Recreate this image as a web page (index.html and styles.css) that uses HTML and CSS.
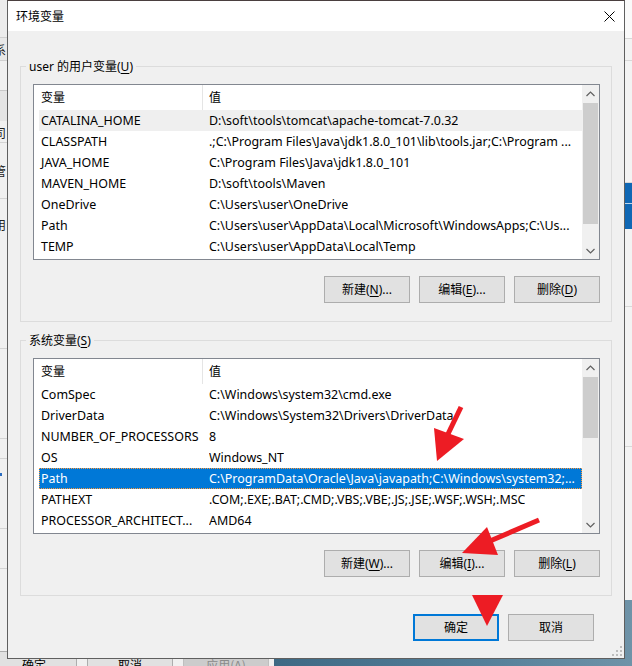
FILE: index.html
```html
<!DOCTYPE html>
<html lang="zh-CN">
<head>
<meta charset="utf-8">
<title>环境变量</title>
<link rel="stylesheet" href="styles.css">
</head>
<body>
<div class="screen">
  <div class="backwin-left">
    <div class="bl bl-a"></div>
    <div class="bl bl-b"><span class="frag">系</span></div>
    <div class="bl bl-c"></div>
    <div class="bl bl-d"></div>
    <div class="bl bl-e"><span class="frag">司</span></div>
    <div class="bl bl-f"><span class="frag">管</span></div>
    <div class="bl bl-g"><span class="frag">用</span></div>
    <div class="bl bl-h"></div>
    <div class="bl bl-i"></div>
    <div class="bl bl-j"><span class="dot"></span></div>
    <div class="bl bl-k"></div>
    <div class="bl bl-l"></div>
  </div>
  <div class="backwin-right">
    <div class="br br-a"></div>
    <div class="br br-b"></div>
    <div class="br br-c"></div>
    <div class="br br-blue"></div>
    <div class="br br-d"></div>
    <div class="br br-e"></div>
    <div class="br br-f"></div>
  </div>
  <div class="desktop"></div>
  <div class="backbtns">
    <div class="bbtn bbtn-first">确定</div>
    <div class="bbtn">取消</div>
    <div class="bbtn bbtn-disabled">应用(A)</div>
  </div>

  <div class="dialog">
    <div class="titlebar">
      <span class="title">环境变量</span>
      <svg class="close" width="11" height="11" viewBox="0 0 11 11"><path d="M0.5 0.5 L10.5 10.5 M10.5 0.5 L0.5 10.5" stroke="#000" stroke-width="1" fill="none"/></svg>
    </div>
    <div class="content">
      <div class="group group-user">
        <span class="group-label">user 的用户变量(<u>U</u>)</span>
        <div class="list">
          <div class="list-main">
            <div class="lv-head">
              <div class="hcell1">变量</div>
              <div class="hcell2">值</div>
            </div>
            <div class="lv-rows">
              <div class="row row-hot"><div class="c1">CATALINA_HOME</div><div class="c2">D:\soft\tools\tomcat\apache-tomcat-7.0.32</div></div>
              <div class="row"><div class="c1">CLASSPATH</div><div class="c2">.;C:\Program Files\Java\jdk1.8.0_101\lib\tools.jar;C:\Program ...</div></div>
              <div class="row"><div class="c1">JAVA_HOME</div><div class="c2">C:\Program Files\Java\jdk1.8.0_101</div></div>
              <div class="row"><div class="c1">MAVEN_HOME</div><div class="c2">D:\soft\tools\Maven</div></div>
              <div class="row"><div class="c1">OneDrive</div><div class="c2">C:\Users\user\OneDrive</div></div>
              <div class="row"><div class="c1">Path</div><div class="c2">C:\Users\user\AppData\Local\Microsoft\WindowsApps;C:\Us...</div></div>
              <div class="row"><div class="c1">TEMP</div><div class="c2">C:\Users\user\AppData\Local\Temp</div></div>
            </div>
          </div>
          <div class="scrollbar">
            <div class="sb-btn"><svg width="9" height="6" viewBox="0 0 9 6"><path d="M0.5 5 L4.5 1 L8.5 5" stroke="#606060" stroke-width="1.2" fill="none"/></svg></div>
            <div class="sb-track"><div class="thumb thumb-user"></div></div>
            <div class="sb-btn"><svg width="9" height="6" viewBox="0 0 9 6"><path d="M0.5 1 L4.5 5 L8.5 1" stroke="#606060" stroke-width="1.2" fill="none"/></svg></div>
          </div>
        </div>
        <div class="btnrow">
          <div class="btn">新建(<u>N</u>)...</div>
          <div class="btn">编辑(<u>E</u>)...</div>
          <div class="btn">删除(<u>D</u>)</div>
        </div>
      </div>

      <div class="group group-sys">
        <span class="group-label">系统变量(<u>S</u>)</span>
        <div class="list">
          <div class="list-main">
            <div class="lv-head">
              <div class="hcell1">变量</div>
              <div class="hcell2">值</div>
            </div>
            <div class="lv-rows">
              <div class="row"><div class="c1">ComSpec</div><div class="c2">C:\Windows\system32\cmd.exe</div></div>
              <div class="row"><div class="c1">DriverData</div><div class="c2">C:\Windows\System32\Drivers\DriverData</div></div>
              <div class="row"><div class="c1">NUMBER_OF_PROCESSORS</div><div class="c2">8</div></div>
              <div class="row"><div class="c1">OS</div><div class="c2">Windows_NT</div></div>
              <div class="row row-sel"><div class="c1">Path</div><div class="c2">C:\ProgramData\Oracle\Java\javapath;C:\Windows\system32;...</div></div>
              <div class="row"><div class="c1">PATHEXT</div><div class="c2">.COM;.EXE;.BAT;.CMD;.VBS;.VBE;.JS;.JSE;.WSF;.WSH;.MSC</div></div>
              <div class="row"><div class="c1">PROCESSOR_ARCHITECT...</div><div class="c2">AMD64</div></div>
            </div>
          </div>
          <div class="scrollbar">
            <div class="sb-btn"><svg width="9" height="6" viewBox="0 0 9 6"><path d="M0.5 5 L4.5 1 L8.5 5" stroke="#606060" stroke-width="1.2" fill="none"/></svg></div>
            <div class="sb-track"><div class="thumb thumb-sys"></div></div>
            <div class="sb-btn"><svg width="9" height="6" viewBox="0 0 9 6"><path d="M0.5 1 L4.5 5 L8.5 1" stroke="#606060" stroke-width="1.2" fill="none"/></svg></div>
          </div>
        </div>
        <div class="btnrow">
          <div class="btn">新建(<u>W</u>)...</div>
          <div class="btn">编辑(<u>I</u>)...</div>
          <div class="btn">删除(<u>L</u>)</div>
        </div>
      </div>

      <div class="footer">
        <div class="btn btn-default">确定</div>
        <div class="btn">取消</div>
      </div>
    </div>
    <svg class="grip" width="10" height="10" viewBox="0 0 10 10">
      <rect x="8" y="0" width="2" height="2" fill="#bdbdbd"/>
      <rect x="4" y="4" width="2" height="2" fill="#bdbdbd"/>
      <rect x="8" y="4" width="2" height="2" fill="#bdbdbd"/>
      <rect x="0" y="8" width="2" height="2" fill="#bdbdbd"/>
      <rect x="4" y="8" width="2" height="2" fill="#bdbdbd"/>
      <rect x="8" y="8" width="2" height="2" fill="#bdbdbd"/>
    </svg>
  </div>

  <svg class="annot" width="632" height="666" viewBox="0 0 632 666">
    <line x1="461" y1="407" x2="448" y2="434" stroke="#ed1c24" stroke-width="5"/>
    <polygon points="434,428 464,439 437,461" fill="#ed1c24"/>
    <line x1="539" y1="520" x2="490" y2="541" stroke="#ed1c24" stroke-width="5"/>
    <polygon points="487,527 498,555 462,553" fill="#ed1c24"/>
    <polygon points="472,595 503,595 487,626" fill="#ed1c24"/>
  </svg>
</div>
</body>
</html>
```

FILE: styles.css
```css
html, body {
  margin: 0;
  padding: 0;
}
body {
  font-family: "Noto Sans", "Noto Sans CJK SC", sans-serif;
  font-size: 12px;
  color: #000;
}
.screen {
  position: relative;
  width: 632px;
  height: 666px;
  overflow: hidden;
  background: #f0f0f0;
}

/* background windows (desktop canvas) */
.backwin-left {
  position: absolute;
  left: 0;
  top: 0;
  width: 7px;
  height: 666px;
  background: #f0f0f0;
  display: flex;
  flex-direction: column;
  overflow: hidden;
}
.bl { box-sizing: border-box; position: relative; overflow: hidden; }
.frag {
  display: block;
  margin-left: -6px;
  font-family: "Noto Sans CJK SC", sans-serif;
  font-size: 12px;
  line-height: 16px;
  color: #222;
}
.bl-a { height: 38px; background: #ececec; border-bottom: 1px solid #d0d0d0; }
.bl-b { height: 23px; background: #e8e8e8; border-bottom: 1px solid #d0d0d0; padding-top: 4px; }
.bl-c { height: 30px; border-bottom: 1px solid #c8c8c8; }
.bl-d { height: 30px; background: #e4e4e4; }
.bl-e { height: 22px; padding-top: 4px; border-bottom: 1px solid #d4d4d4; }
.bl-f { height: 56px; padding-top: 20px; border-bottom: 1px solid #d4d4d4; }
.bl-g { height: 150px; padding-top: 18px; border-bottom: 1px solid #d4d4d4; }
.bl-h { height: 90px; border-bottom: 1px solid #d4d4d4; }
.bl-i { height: 20px; border-bottom: 1px solid #d4d4d4; }
.bl-j { height: 70px; padding-top: 14px; border-bottom: 1px solid #d4d4d4; }
.bl-k { height: 40px; border-bottom: 1px solid #d4d4d4; }
.bl-l { flex: 1; }
.dot { display: block; width: 2px; height: 3px; background: #2a6cc0; }

.backwin-right {
  position: absolute;
  left: 625px;
  top: 0;
  width: 7px;
  height: 666px;
  background: #f3f3f3;
  display: flex;
  flex-direction: column;
}
.br { box-sizing: border-box; }
.br-a { height: 39px; background: #fafafa; border-bottom: 1px solid #d8d8d8; }
.br-b { height: 22px; border-bottom: 1px solid #d8d8d8; }
.br-c { height: 122px; border-bottom: 1px solid #d8d8d8; }
.br-blue { height: 46px; background: #0f67b4; border-top: 20px solid #0f67b4; border-bottom: 24px solid #0f67b4; box-shadow: inset 0 1px 0 #bcd6ee; }
.br-d { height: 78px; border-bottom: 1px solid #d8d8d8; }
.br-e { height: 140px; border-bottom: 1px solid #d8d8d8; }
.br-f { height: 160px; border-bottom: 1px solid #d8d8d8; }

.desktop {
  position: absolute;
  left: 274px;
  top: 600px;
  right: 0;
  bottom: 0;
  background: linear-gradient(90deg, #3e6984 0%, #56809a 60%, #6f93a8 100%);
}
.backbtns {
  position: absolute;
  left: -9px;
  top: 651px;
  display: flex;
  gap: 10px;
  width: 283px;
  height: 27px;
}
.bbtn {
  width: 86px;
  height: 27px;
  box-sizing: border-box;
  border: 1px solid #adadad;
  background: #e1e1e1;
  display: flex;
  align-items: center;
  justify-content: center;
  font-family: "Noto Sans CJK SC", sans-serif;
  color: #000;
}
.bbtn-disabled {
  background: #cccccc;
  border-color: #bfbfbf;
  color: #8a8a8a;
}

/* dialog */
.dialog {
  position: absolute;
  left: 7px;
  top: 0;
  width: 618px;
  height: 659px;
  box-sizing: border-box;
  border: 1px solid #5f5f5f;
  border-top-color: #4a3f3f;
  background: #f0f0f0;
  display: flex;
  flex-direction: column;
}
.titlebar {
  height: 30px;
  flex: none;
  background: #fff;
  display: flex;
  align-items: center;
  justify-content: space-between;
  padding: 0 9px 0 8px;
}
.title {
  font-family: "Noto Sans CJK SC", sans-serif;
  font-size: 12px;
  line-height: 16px;
}
.close { display: block; }

.content {
  padding: 0 12px;
  display: flex;
  flex-direction: column;
}
.group {
  border: 1px solid #dcdcdc;
  padding: 0 11px 18px 12px;
  display: flex;
  flex-direction: column;
}
.group-user { margin-top: 35px; }
.group-sys { margin-top: 18px; }
.group-label {
  display: block;
  width: max-content;
  height: 16px;
  line-height: 16px;
  margin: -8px 0 0 -7px;
  padding: 0 3px;
  background: #f0f0f0;
}
.list {
  margin-top: 9px;
  height: 176px;
  box-sizing: border-box;
  border: 1px solid #828790;
  background: #fff;
  display: flex;
}
.list-main {
  width: 548px;
  display: flex;
  flex-direction: column;
  overflow: hidden;
}
.lv-head {
  display: flex;
  height: 25px;
  line-height: 25px;
  flex: none;
}
.hcell1 {
  width: 169px;
  box-sizing: border-box;
  padding-left: 7px;
  border-right: 1px solid #e5e5e5;
}
.hcell2 { padding-left: 6px; }
.lv-rows {
  margin-left: 5px;
  display: flex;
  flex-direction: column;
}
.row {
  display: flex;
  height: 21px;
  line-height: 21px;
  white-space: nowrap;
  font-size: 12.45px;
}
.c1 {
  width: 170px;
  flex: none;
  box-sizing: border-box;
  padding-left: 2px;
  overflow: hidden;
}
.c2 { overflow: hidden; }
.row-hot { background: #efefef; }
.row-sel {
  background: #0078d7;
  color: #fff;
  outline: 1px dotted #ff9a3c;
  outline-offset: -1px;
}

.scrollbar {
  width: 17px;
  background: #f0f0f0;
  display: flex;
  flex-direction: column;
}
.sb-btn {
  height: 17px;
  flex: none;
  display: flex;
  align-items: center;
  justify-content: center;
}
.sb-btn svg { display: block; }
.sb-track {
  flex: 1;
  padding: 1px 1px 0;
}
.thumb { background: #cdcdcd; }
.thumb-user { height: 121px; }
.thumb-sys { height: 61px; }

.btnrow {
  display: flex;
  justify-content: flex-end;
  gap: 9px;
  margin-top: 16px;
}
.btn {
  width: 86px;
  height: 27px;
  box-sizing: border-box;
  border: 1px solid #adadad;
  background: #e1e1e1;
  display: flex;
  align-items: center;
  justify-content: center;
  line-height: 16px;
}
.btn u { text-underline-offset: 2px; }
.group-label u { text-underline-offset: 2px; }
.btn-default { border: 2px solid #0078d7; }
.footer {
  display: flex;
  justify-content: flex-end;
  gap: 9px;
  margin-top: 18px;
  padding-right: 18px;
}
.grip {
  position: absolute;
  right: 2px;
  bottom: 2px;
}
.annot {
  position: absolute;
  left: 0;
  top: 0;
  pointer-events: none;
}
```
